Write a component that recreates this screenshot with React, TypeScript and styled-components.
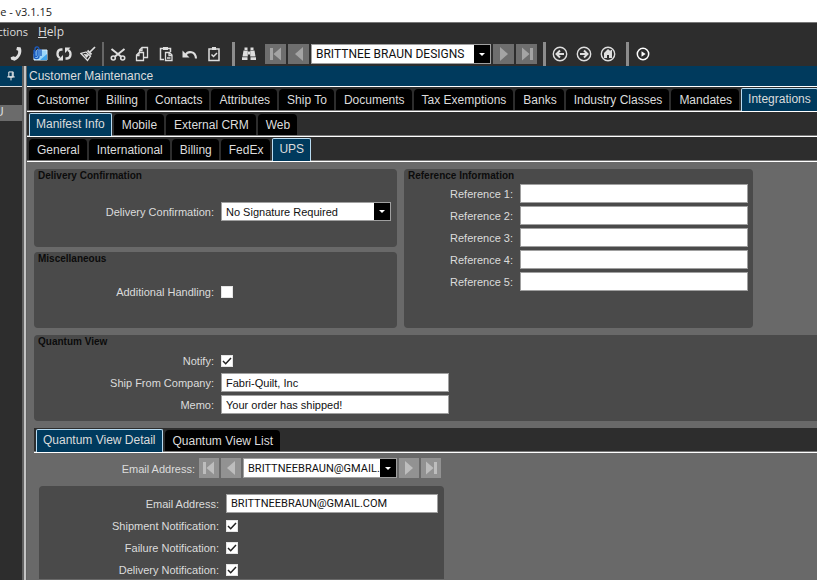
import React from "react";
import styled, { createGlobalStyle, css } from "styled-components";

const sans = '"Liberation Sans", Arial, sans-serif';
const narrow = 'Roboto, "Liberation Sans", sans-serif';
const ui = '"Open Sans", "Noto Sans", sans-serif';

const Global = createGlobalStyle`
  * { box-sizing: border-box; }
  html, body, #root { height: 100%; }
  body { margin: 0; overflow: hidden; background: #2d2d2d; font: 12px ${sans}; }
  button, input, select { font: inherit; margin: 0; padding: 0; border: 0; border-radius: 0; outline: 0; }
`;

const Window = styled.div`
  display: flex;
  flex-direction: column;
  min-height: 100vh;
  color: #dcdcdc;
`;
const TitleBar = styled.header`
  height: 23px;
  background: #fff;
  border-bottom: 1px solid #777;
  color: #222;
  font: 11px/23px ${ui};
  white-space: nowrap;
`;
const TitleText = styled.div`
  display: flex;
  justify-content: flex-end;
  width: 52px;
  overflow: hidden;
`;
const Menu = styled.nav`
  display: flex;
  gap: 10px;
  height: 19px;
`;
const MenuItem = styled.button<{ $clipped?: boolean }>`
  display: flex;
  justify-content: flex-end;
  width: ${(p) => (p.$clipped ? "28px" : "auto")};
  overflow: hidden;
  background: none;
  color: #dcdcdc;
  font: ${(p) => (p.$clipped ? "11px" : "12px")}/18px ${ui};
`;
const Toolbar = styled.div`
  display: flex;
  align-items: center;
  height: 24px;
`;
const Tool = styled.button`
  display: flex;
  flex: none;
  justify-content: center;
  align-items: center;
  width: 24px;
  height: 24px;
  background: none;
  color: #dedede;
`;
const Edge = styled.div`
  flex: none;
  width: 4px;
`;
const Divider = styled.div<{ $thin?: boolean }>`
  flex: none;
  width: ${(p) => (p.$thin ? "2px" : "3px")};
  height: 24px;
  margin: 0 2px;
  background: ${(p) => (p.$thin ? "#666" : "#8c8c8c")};
`;
const Nav = styled.div<{ $light?: boolean }>`
  display: flex;
  flex: none;
  align-items: center;
  gap: 2px;
  --face: ${(p) => (p.$light ? "#929292" : "#6e6e6e")};
  --mark: ${(p) => (p.$light ? "#bdbdbd" : "#a4a4a4")};
`;
const NavButton = styled.button<{ $w: number }>`
  display: flex;
  justify-content: center;
  align-items: center;
  width: ${(p) => p.$w}px;
  height: 20px;
  background: var(--face);
  color: var(--mark);
`;
const Combo = styled.div<{ $w: number; $h: number; $text: string }>`
  display: grid;
  grid-template-columns: 1fr 16px;
  width: ${(p) => p.$w}px;
  height: ${(p) => p.$h}px;
  border: 1px solid #a0a0a0;
  background: #fff;
  font: ${(p) => p.$text};
`;
const Select = styled.select`
  grid-area: 1 / 1 / 2 / 3;
  min-width: 0;
  appearance: none;
  background: transparent;
  color: #111;
  padding: 0 16px 0 4px;
`;
const Arrow = styled.span`
  display: flex;
  grid-area: 1 / 2 / 2 / 3;
  justify-content: center;
  align-items: center;
  background: #000;
  pointer-events: none;
  &::after {
    content: "";
    border: 3px solid transparent;
    border-top-color: #fff;
    border-bottom: 0;
  }
`;
const Body = styled.div`
  display: flex;
  flex: 1;
`;
const Side = styled.aside`
  flex: none;
  width: 22px;
  overflow: hidden;
`;
const SideHead = styled.div`
  display: flex;
  justify-content: center;
  align-items: center;
  height: 21px;
  background: #003a5d;
  border-bottom: 1px solid #ddd;
`;
const SideRow = styled.div`
  height: 16px;
  margin-top: 18px;
  background: #6b6b6b;
  font: 12px/15px ${sans};
  text-indent: -5px;
`;
const Splitter = styled.div`
  flex: none;
  width: 5px;
  background: #c4c4c4;
  border: solid #626262;
  border-width: 0 1px 0 2px;
`;
const Main = styled.main`
  flex: 1;
  min-width: 0;
  background: #696969;
`;
const Heading = styled.h1`
  height: 21px;
  margin: 0;
  padding-left: 2px;
  background: #003a5d;
  border-bottom: 1px solid #fff;
  font: 12px/20px ${sans};
`;
const Strip = styled.div`
  display: flex;
  align-items: flex-end;
  gap: 2px;
  height: 25px;
  padding-left: 2px;
  background: #2d2d2d;
  border-bottom: 1px solid #fff;
  box-shadow: inset 0 -1px #777;
  overflow: hidden;
`;
const Tab = styled.button<{ $on: boolean }>`
  flex: none;
  height: 21px;
  margin-bottom: 1px;
  padding: 2px 7px 0 8px;
  background: #000;
  border-radius: 4px 4px 0 0;
  color: #dcdcdc;
  font: 12px/19px ${sans};
  white-space: nowrap;
  ${(p) =>
    p.$on &&
    css`
      height: 23px;
      margin-bottom: 0;
      padding: 0 6px 2px;
      border: 1px solid #b9dcf2;
      border-bottom: 0;
      border-radius: 2px 2px 0 0;
      background: #003a5d;
    `}
`;
const Page = styled.div`
  display: grid;
  grid-template-columns: 363px 349px;
  gap: 5px 7px;
  padding: 7px 0 7px 7px;
`;
const Group = styled.fieldset<{ $area: string; $h: number; $square?: boolean }>`
  grid-area: ${(p) => p.$area};
  min-width: 0;
  min-height: ${(p) => p.$h}px;
  margin: 0;
  padding: 0 0 7px;
  border: 0;
  border-radius: ${(p) => (p.$square ? "4px 0 0 4px" : "4px")};
  background: #4a4a4a;
`;
const Legend = styled.legend`
  float: left;
  width: 100%;
  height: 15px;
  padding: 0 4px;
  color: #0c0c0c;
  font: bold 10px/13px ${sans};
`;
const Rows = styled.div<{ $label: number; $pad: number }>`
  display: grid;
  clear: both;
  grid-template-columns: ${(p) => p.$label}px auto;
  grid-auto-rows: 19px;
  justify-content: start;
  align-items: center;
  gap: 3px 7px;
  padding-top: ${(p) => p.$pad}px;
`;
const Label = styled.label`
  padding-top: 1px;
  color: #dcdcdc;
  font: 11px/14px ${sans};
  text-align: right;
  white-space: nowrap;
`;
const Input = styled.input<{ $w?: number }>`
  width: ${(p) => p.$w ?? 228}px;
  height: 19px;
  padding: 0 4px;
  border: 1px solid #a0a0a0;
  background: #fff;
  color: #111;
  font: 11px ${(p) => (p.$w ? narrow : sans)};
`;
const CheckBox = styled.span`
  display: grid;
  width: 12px;
  height: 12px;
  input, svg { grid-area: 1 / 1; }
  input {
    width: 12px;
    height: 12px;
    appearance: none;
    background: #fff;
    border: 1px solid #e4e4e4;
  }
  svg { display: none; pointer-events: none; }
  input:checked + svg { display: block; }
`;
const Detail = styled.section`
  margin: 0 0 7px 7px;
  &:last-child { margin-bottom: 0; }
`;
const Picker = styled.div`
  display: grid;
  grid-template-columns: 161px auto;
  justify-content: start;
  align-items: center;
  gap: 4px;
  padding: 5px 0 8px;
`;
const DetailGroup = styled.div`
  width: 405px;
  margin-left: 5px;
  border-radius: 4px 4px 0 0;
  background: #4a4a4a;
`;

const svg = (size: number) => ({ width: size, height: size, viewBox: "0 0 16 16", fill: "none", stroke: "currentColor", "aria-hidden": true as const });

const Phone = () => (
  <svg {...svg(16)}><path d="M9 1l3.500.3c2.500 4.700-.6 11.400-6 13.400l-3.500-1.200-.3-2.200 2.800-1 1.800.7c2.500-1.700 3.200-4.200 2.800-6.200L8.300 4z" fill="currentColor" stroke="none" /></svg>
);
const Attach = () => (
  <svg {...svg(16)}><path d="M5 4h10v10H2V8z" fill="#9bd6fa" stroke="#d9f0ff" /><path d="M8 14l7-6v6z" fill="#3da3ec" stroke="none" /><path d="M2 4v6c0 3.500 5 3.500 5 0V3C7 0 3 .5 3 3v6.500c0 1.500 2.200 1.500 2.200 0V4M9 3v7" stroke="#195bc1" strokeWidth="1.300" /></svg>
);
const Refresh = () => (
  <svg {...svg(16)}><path d="M6.500 3.500H5C.5 4 .5 10.500 4 12M9.500 12.500H11c4.500-.5 4.500-7 1-8.500" strokeWidth="2.300" /><path d="M1.500 14.500H7V9zM14.500 1.500H9V7z" fill="currentColor" stroke="none" /></svg>
);
const Broom = () => (
  <svg {...svg(16)}><path d="M15 1L10 6" strokeWidth="1.700" /><path d="M7.500 4.500l4 4" strokeWidth="1.800" /><path d="M6 6L1 7.500 7.500 14.500 10.500 10z" strokeWidth="1.300" /><path d="M3.500 8l6 .5-3 3.500z" fill="currentColor" stroke="none" /></svg>
);
const Cut = () => (
  <svg {...svg(16)}><path d="M1.500 3l9.500 7.500M14.500 3L5 10.500" strokeWidth="2" /><circle cx="3.300" cy="12" r="2" strokeWidth="1.600" /><circle cx="12.700" cy="12" r="2" strokeWidth="1.600" /></svg>
);
const Copy = () => (
  <svg {...svg(16)}><path d="M9.500 11.500H13.500V1.500H8L5.500 4v2.500M8 1.500V4.500H5.500M5 6.500H9.500v8H2.500V9L5 6.500v3h-2.500" strokeWidth="1.300" /></svg>
);
const Paste = () => (
  <svg {...svg(16)}><path d="M6 13.500H2.500V2.500h10V6" strokeWidth="1.500" /><path d="M5 1h5v3H5z" fill="currentColor" stroke="none" /><path d="M7.500 6.500h4l2.500 2.500v5.500H7.500zM11 7v2.500h3M9 12h3.500" strokeWidth="1.300" /></svg>
);
const Undo = () => (
  <svg {...svg(16)}><path d="M3.500 9C6 4.500 13.500 5 14 12.500" strokeWidth="2.100" /><path d="M.5 4.500v7H7.500z" fill="currentColor" stroke="none" /></svg>
);
const Task = () => (
  <svg {...svg(16)}><path d="M3 3h10v11.500H3z" strokeWidth="1.500" /><path d="M6 1h4v3H6z" fill="currentColor" stroke="none" /><path d="M5.500 8.500l2 2L11 7" strokeWidth="1.500" /></svg>
);
const Find = () => (
  <svg {...svg(16)}><path d="M3.500 1.500h3v2.500h-3zM9.500 1.500h3v2.500h-3zM2.500 4.500h4.300v6H1.500zM9.200 4.500h4.300l1 6H9.200zM1 11.200h5.500v2.800H1zM9.500 11.200H15v2.800H9.500zM7 5.500h2v3H7z" fill="currentColor" stroke="none" /></svg>
);
const Back = () => (
  <svg {...svg(16)}><circle cx="8" cy="8" r="6.700" strokeWidth="1.400" /><path d="M12 8H5M8 4.500L4.500 8 8 11.500" strokeWidth="2" /></svg>
);
const Forward = () => (
  <svg {...svg(16)}><circle cx="8" cy="8" r="6.700" strokeWidth="1.400" /><path d="M4 8h7M8 4.500L11.500 8 8 11.500" strokeWidth="2" /></svg>
);
const Home = () => (
  <svg {...svg(16)}><circle cx="8" cy="8" r="6.700" strokeWidth="1.400" /><path d="M8 3L4 7v5h3V9h2v3h3V4h-1.500v1.300z" fill="currentColor" stroke="none" /></svg>
);
const Run = () => (
  <svg {...svg(14)}><circle cx="8" cy="8" r="6.500" stroke="#fff" strokeWidth="1.700" /><path d="M6.300 4.800L11 8l-4.700 3.200z" fill="#fff" stroke="none" /></svg>
);
const Pin = () => (
  <svg {...svg(10)}><path d="M4.500 1.500h7v8h-7zM2 9.500h12M8 9.500V15M10 2v7" stroke="#eee" strokeWidth="1.600" /></svg>
);
const First = () => (
  <svg {...svg(16)}><path d="M2 2h3v12H2zM13 1.500v13L5.500 8z" fill="currentColor" stroke="none" /></svg>
);
const Prev = () => (
  <svg {...svg(16)}><path d="M12 1v14L4 8z" fill="currentColor" stroke="none" /></svg>
);
const Next = () => (
  <svg {...svg(16)}><path d="M4 1v14l8-7z" fill="currentColor" stroke="none" /></svg>
);
const Last = () => (
  <svg {...svg(16)}><path d="M14 2h-3v12h3zM3 1.500v13L10.500 8z" fill="currentColor" stroke="none" /></svg>
);

const Tools = ({ items }: { items: [string, React.FC][] }) => (
  <>
    {items.map(([name, Icon]) => (
      <Tool key={name} type="button" aria-label={name}><Icon /></Tool>
    ))}
  </>
);

const Tabs = ({ items, active, label }: { items: string[]; active: string; label: string }) => (
  <Strip role="tablist" aria-label={label}>
    {items.map((t) => (
      <Tab key={t} type="button" role="tab" aria-selected={t === active} $on={t === active}>{t}</Tab>
    ))}
  </Strip>
);

const Dropdown = ({ id, value, w, h, text, label }: { id: string; value: string; w: number; h: number; text: string; label?: string }) => (
  <Combo $w={w} $h={h} $text={text}>
    <Select id={id} aria-label={label} defaultValue={value}><option>{value}</option></Select>
    <Arrow />
  </Combo>
);

const Pager = ({ light, children }: { light?: boolean; children: React.ReactNode }) => {
  const w = light ? 20 : 21;
  return (
    <Nav $light={light}>
      <NavButton type="button" aria-label="First" $w={w}><First /></NavButton>
      <NavButton type="button" aria-label="Previous" $w={w}><Prev /></NavButton>
      {children}
      <NavButton type="button" aria-label="Next" $w={w}><Next /></NavButton>
      <NavButton type="button" aria-label="Last" $w={w}><Last /></NavButton>
    </Nav>
  );
};

const TextRow = ({ id, label, value = "", w }: { id: string; label: string; value?: string; w?: number }) => (
  <>
    <Label htmlFor={id}>{label}</Label>
    <Input id={id} defaultValue={value} $w={w} />
  </>
);

const CheckRow = ({ id, label, checked }: { id: string; label: string; checked?: boolean }) => (
  <>
    <Label htmlFor={id}>{label}</Label>
    <CheckBox>
      <input id={id} type="checkbox" defaultChecked={checked} />
      <svg width="12" height="12" viewBox="0 0 12 12" fill="none" stroke="#222" strokeWidth="1.500"><path d="M2 6l2.700 2.700L10 3" /></svg>
    </CheckBox>
  </>
);

export default function App() {
  return (
    <Window>
      <Global />
      <TitleBar><TitleText>ce - v3.1.15</TitleText></TitleBar>
      <Menu>
        <MenuItem type="button" $clipped>ctions</MenuItem>
        <MenuItem type="button"><span><u>H</u>elp</span></MenuItem>
      </Menu>
      <Toolbar>
        <Edge />
        <Tools items={[["Call", Phone], ["Attachments", Attach], ["Refresh", Refresh], ["Clear", Broom]]} />
        <Divider $thin />
        <Tools items={[["Cut", Cut], ["Copy", Copy], ["Paste", Paste], ["Undo", Undo], ["Tasks", Task]]} />
        <Edge />
        <Divider />
        <Tools items={[["Find", Find]]} />
        <Edge />
        <Pager>
          <Dropdown id="customer" label="Customer" value="BRITTNEE BRAUN DESIGNS" w={180} h={20} text={`12px ${narrow}`} />
        </Pager>
        <Edge />
        <Divider />
        <Tools items={[["Back", Back], ["Forward", Forward], ["Home", Home]]} />
        <Edge />
        <Divider />
        <Tools items={[["Run", Run]]} />
      </Toolbar>
      <Body>
        <Side>
          <SideHead><Pin /></SideHead>
          <SideRow>U</SideRow>
        </Side>
        <Splitter />
        <Main>
          <Heading>Customer Maintenance</Heading>
          <Tabs label="Sections" active="Integrations" items={["Customer", "Billing", "Contacts", "Attributes", "Ship To", "Documents", "Tax Exemptions", "Banks", "Industry Classes", "Mandates", "Integrations"]} />
          <Tabs label="Integrations" active="Manifest Info" items={["Manifest Info", "Mobile", "External CRM", "Web"]} />
          <Tabs label="Manifest Info" active="UPS" items={["General", "International", "Billing", "FedEx", "UPS"]} />
          <Page>
            <Group $area="1 / 1" $h={78}>
              <Legend>Delivery Confirmation</Legend>
              <Rows $label={180} $pad={18}>
                <Label htmlFor="confirmation">Delivery Confirmation:</Label>
                <Dropdown id="confirmation" value="No Signature Required" w={170} h={19} text={`11px ${sans}`} />
              </Rows>
            </Group>
            <Group $area="2 / 1" $h={76}>
              <Legend>Miscellaneous</Legend>
              <Rows $label={180} $pad={15}>
                <CheckRow id="handling" label="Additional Handling:" />
              </Rows>
            </Group>
            <Group $area="1 / 2 / 3 / 3" $h={159}>
              <Legend>Reference Information</Legend>
              <Rows $label={109} $pad={0}>
                {[1, 2, 3, 4, 5].map((n) => <TextRow key={n} id={`ref${n}`} label={`Reference ${n}:`} />)}
              </Rows>
            </Group>
          </Page>
          <Detail>
            <Group $area="auto" $h={86} $square>
              <Legend>Quantum View</Legend>
              <Rows $label={180} $pad={1}>
                <CheckRow id="notify" label="Notify:" checked />
                <TextRow id="company" label="Ship From Company:" value="Fabri-Quilt, Inc" />
                <TextRow id="memo" label="Memo:" value="Your order has shipped!" />
              </Rows>
            </Group>
          </Detail>
          <Detail>
            <Tabs label="Quantum View" active="Quantum View Detail" items={["Quantum View Detail", "Quantum View List"]} />
            <Picker>
              <Label htmlFor="address">Email Address:</Label>
              <Pager light>
                <Dropdown id="address" value="BRITTNEEBRAUN@GMAIL.COM" w={154} h={20} text={`11px ${narrow}`} />
              </Pager>
            </Picker>
            <DetailGroup>
              <Rows $label={180} $pad={8}>
                <TextRow id="email" label="Email Address:" value="BRITTNEEBRAUN@GMAIL.COM" w={212} />
                <CheckRow id="shipment" label="Shipment Notification:" checked />
                <CheckRow id="failure" label="Failure Notification:" checked />
                <CheckRow id="delivery" label="Delivery Notification:" checked />
              </Rows>
            </DetailGroup>
          </Detail>
        </Main>
      </Body>
    </Window>
  );
}
